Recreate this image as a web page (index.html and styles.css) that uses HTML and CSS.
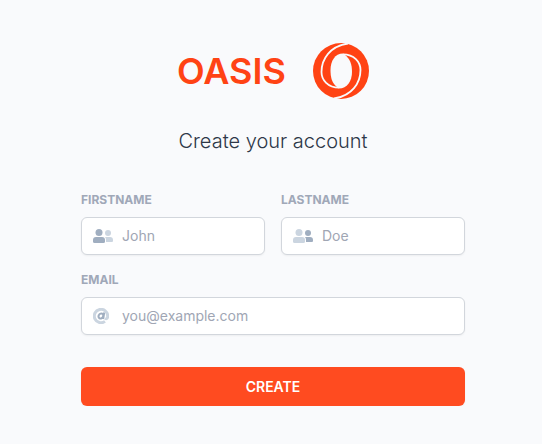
FILE: index.html
```html
<!DOCTYPE html>
<html lang="en">
<head>
<meta charset="utf-8">
<meta name="viewport" content="width=device-width, initial-scale=1">
<title>Create your account</title>
<link rel="stylesheet" href="styles.css">
</head>
<body>
<main class="signup">
  <div class="brand">
    <span class="wordmark">OASIS</span>
    <svg class="emblem" viewBox="0 0 56 56" aria-hidden="true">
      <circle cx="28" cy="28" r="28" fill="#ff4314"/>
      <path d="M32 12C37 16 39 21 39 29C39 38 34 45.500 26 45.500L24 44C19 40 17.500 35 17.500 27C17.500 18 22 10.500 30 10.500Z" fill="#f9fafc"/>
      <path d="M35 .5C17 3 8.500 16 8.500 29C8.500 37 15 44.700 26 44.700" fill="none" stroke="#f9fafc" stroke-width="1.800"/>
      <path d="M21 55.500C39 53 47.500 40 47.500 27C47.500 19 41 11.300 30 11.300" fill="none" stroke="#f9fafc" stroke-width="1.800"/>
    </svg>
  </div>
  <h1 class="title">Create your account</h1>
  <form class="form">
    <div class="field">
      <label class="label" for="firstname">FIRSTNAME</label>
      <div class="control">
        <svg class="icon" viewBox="0 0 20 14" aria-hidden="true">
          <g class="dark"><circle cx="6" cy="3.500" r="3.500"/><path d="M3 8H9Q12 8 12 11V12.500Q12 14 10.500 14H1.500Q0 14 0 12.500V11Q0 8 3 8Z"/></g>
          <g class="light"><circle cx="15" cy="4" r="3"/><path d="M12 8H17Q20 8 20 11V12Q20 13 19 13H13V11Q13 9 12 8Z"/></g>
        </svg>
        <input class="input" id="firstname" type="text" placeholder="John">
      </div>
    </div>
    <div class="field">
      <label class="label" for="lastname">LASTNAME</label>
      <div class="control">
        <svg class="icon" viewBox="0 0 20 14" aria-hidden="true">
          <g class="light"><circle cx="6" cy="3.500" r="3.500"/><path d="M3 8H9Q12 8 12 11V12.500Q12 14 10.500 14H1.500Q0 14 0 12.500V11Q0 8 3 8Z"/></g>
          <g class="dark"><circle cx="15" cy="4" r="3"/><path d="M12 8H17Q20 8 20 11V12Q20 13 19 13H13V11Q13 9 12 8Z"/></g>
        </svg>
        <input class="input" id="lastname" type="text" placeholder="Doe">
      </div>
    </div>
    <div class="field wide">
      <label class="label" for="email">EMAIL</label>
      <div class="control">
        <svg class="icon at" viewBox="0 0 16 16" aria-hidden="true">
          <path class="ring" d="M12 13.400A6.700 6.700 0 1 1 14.700 8C14.700 10.500 13.500 11.200 12 10.500"/>
          <path class="letter" d="M11.200 4.500L10.200 11M10.200 8C9.800 10 8 11 6.500 10.300C4.500 9 5.800 5.500 8.200 5.500Q10.500 5.500 10.200 8"/>
        </svg>
        <input class="input" id="email" type="email" placeholder="you@example.com">
      </div>
    </div>
    <button class="submit wide" type="submit">CREATE</button>
  </form>
</main>
</body>
</html>
```

FILE: styles.css
```css
* { box-sizing: border-box; }

body {
  margin: 0;
  padding: 43px 0 0 4px;
  background: #f9fafc;
  font-family: Inter, "Liberation Sans", sans-serif;
  color: #2d3748;
}

.signup {
  max-width: 384px;
  margin: 0 auto;
}

.brand {
  display: flex;
  justify-content: space-between;
  align-items: center;
  width: 50%;
  margin: 0 auto;
}

.wordmark {
  font-size: 36px;
  font-weight: 600;
  line-height: 56px;
  color: #ff4314;
}

.emblem { width: 56px; height: 56px; }

.title {
  margin: 28px 0 36px;
  font-size: 20px;
  font-weight: 300;
  line-height: 28px;
  text-align: center;
}

.form {
  display: grid;
  grid-template-columns: 1fr 1fr;
  gap: 16px;
}

.wide { grid-column: 1 / -1; }

.label {
  display: block;
  margin-bottom: 8px;
  font-size: 12px;
  font-weight: 700;
  line-height: 18px;
  color: #a0a8b8;
}

.control { position: relative; }

.icon {
  position: absolute;
  left: 12px;
  top: 12px;
  width: 20px;
  height: 14px;
}

.icon.at { top: 11px; width: 16px; height: 16px; }

.dark { fill: #a0aec0; }
.light { fill: #cbd5e0; }
.ring { fill: none; stroke: #cbd5e0; stroke-width: 3; }
.letter { fill: none; stroke: #a0aec0; stroke-width: 2; }

.input {
  display: block;
  width: 100%;
  height: 38px;
  padding: 7px 12px 9px 40px;
  border: 1px solid #d2d6dc;
  border-radius: 6px;
  background: #fff;
  box-shadow: 0 1px 2px rgba(0, 0, 0, .05);
  font: 400 14px/20px Inter, sans-serif;
  color: #2d3748;
}

.input::placeholder { color: #a0a6b4; opacity: 1; }

.submit {
  margin-top: 16px;
  padding: 10px 16px;
  border: 0;
  border-radius: 6px;
  background: #ff4b20;
  box-shadow: 0 1px 2px rgba(0, 0, 0, .05);
  font: 600 14px/19px Inter, sans-serif;
  color: #fff;
}
```
